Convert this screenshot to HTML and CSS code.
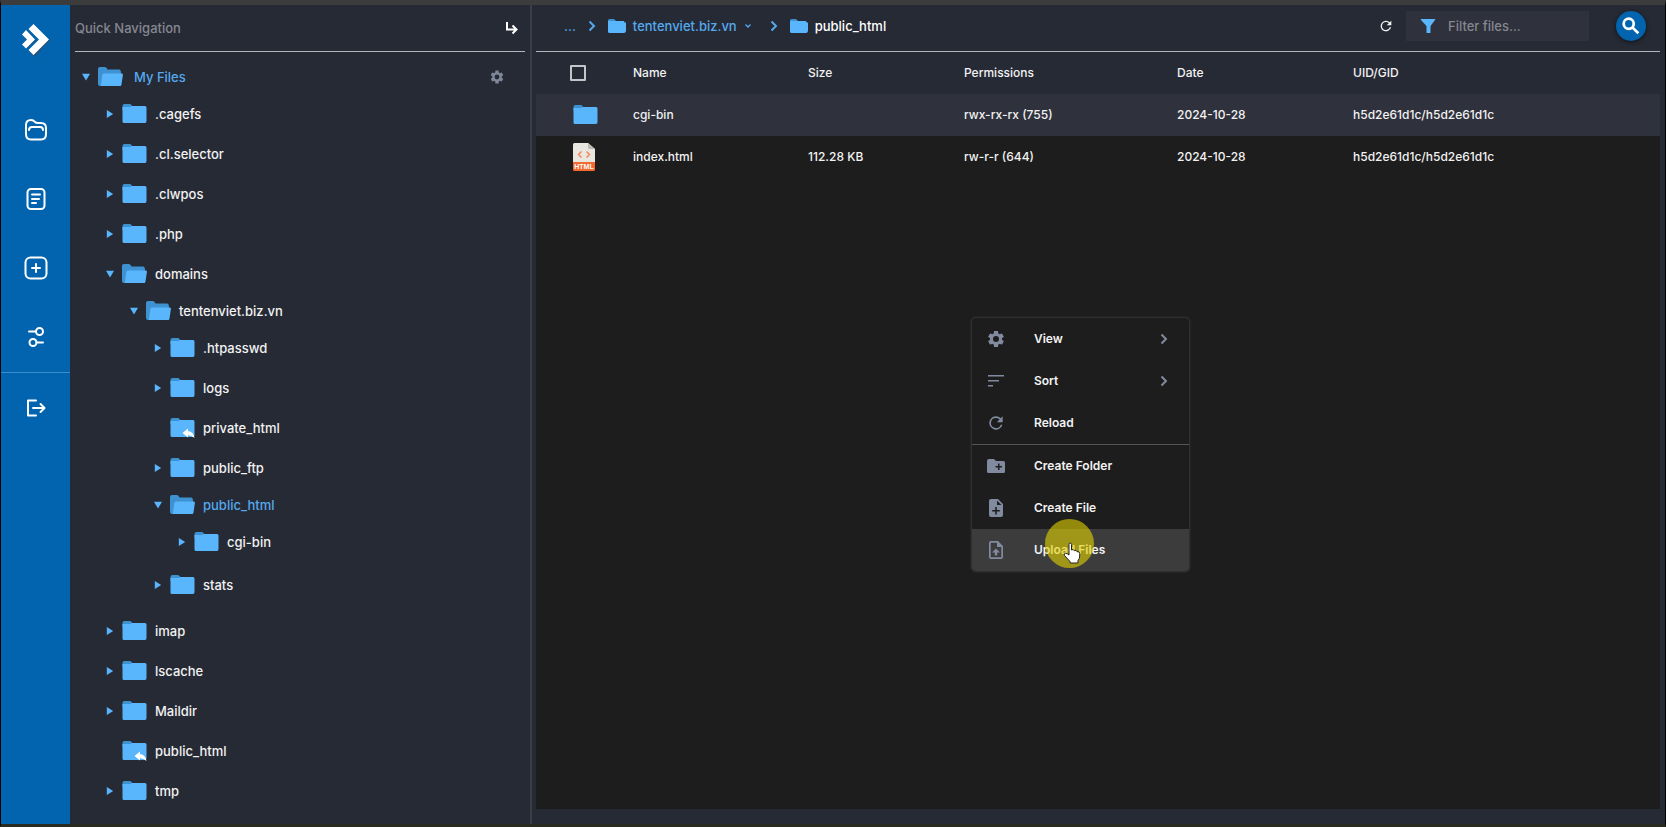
FILE: index.html
```html
<!DOCTYPE html>
<html lang="en">
<head>
<meta charset="utf-8">
<title>File Manager</title>
<link rel="stylesheet" href="styles.css">
</head>
<body>
<svg class="defs" aria-hidden="true">
  <symbol id="folder" viewBox="0 0 24 20"><path fill="#3e92d2" d="M0 2Q0 0 2 0H7Q8.500 0 9 1L10 2.500V6H0Z"/><path fill="#59b5fc" d="M0 3H8L9.500 2H22.500Q24 2 24 3.500V17Q24 19 22.500 19H1.500Q0 19 0 17.500Z"/></symbol>
  <symbol id="folder-open" viewBox="0 0 25 20"><path fill="#3e92d2" d="M0 2Q0 0 2 0H7Q8.500 0 9.500 2.500H21Q23 2.500 23 6V19H2Q0 19 0 17Z"/><path fill="#59b5fc" d="M6 6.500H23.500Q25.300 6.500 24.900 8L23.500 17.500Q23.200 19 22 19H2.800L4.300 8Q4.600 6.500 6 6.500Z"/></symbol>
  <symbol id="folder-link" viewBox="0 0 24 20"><path fill="#3e92d2" d="M0 2Q0 0 2 0H7Q8.500 0 9 1L10 2.500V6H0Z"/><path fill="#59b5fc" d="M0 3H8L9.500 2H22.500Q24 2 24 3.500V17Q24 19 22.500 19H1.500Q0 19 0 17.500Z"/><path fill="#fff" d="M12 15L17.500 10.500V13Q23 13.500 24 20Q21 17 17.500 17.200V19.500Z"/></symbol>
  <symbol id="crumb-folder" viewBox="0 0 18 14"><path fill="#3e92d2" d="M0 1.500Q0 0 1.500 0H6L8 2H16V8H0Z"/><path fill="#59b5fc" d="M0 2H15.500Q16.500 2 16.500 3.500H18V11Q18 14 16 14H1.500Q0 14 0 12.500Z"/></symbol>
  <symbol id="gear" viewBox="0 0 24 24"><path d="M19.140 12.940c.04-.3.06-.61.06-.94 0-.32-.02-.64-.07-.94l2.030-1.580c.18-.14.23-.41.12-.61l-1.920-3.320c-.12-.22-.37-.29-.59-.22l-2.390.96c-.5-.38-1.030-.7-1.620-.94L14.400 2.810c-.04-.24-.24-.41-.48-.41h-3.840c-.24 0-.43.17-.47.41L9.250 5.350c-.59.24-1.130.57-1.620.94l-2.390-.96c-.22-.08-.47 0-.59.22L2.740 8.870c-.12.21-.08.47.12.61l2.030 1.580c-.05.3-.09.63-.09.94s.02.64.07.94l-2.030 1.580c-.18.14-.23.41-.12.61l1.920 3.320c.12.22.37.29.59.22l2.390-.96c.5.38 1.030.7 1.620.94l.36 2.540c.05.24.24.41.48.41h3.840c.24 0 .44-.17.47-.41l.36-2.540c.59-.24 1.130-.56 1.620-.94l2.390.96c.22.08.47 0 .59-.22l1.920-3.320c.12-.22.07-.47-.12-.61zM12 15.600A3.600 3.600 0 1 1 12 8.400a3.600 3.600 0 0 1 0 7.200z"/></symbol>
  <symbol id="reload" viewBox="0 0 24 24"><path d="M17.650 6.350A8 8 0 1 0 19.730 14h-2.080A6 6 0 1 1 12 6c1.660 0 3.140.69 4.220 1.780L13 11h7V4z"/></symbol>
  <symbol id="chevron" viewBox="0 0 8 12"><path d="M1.500 1.500L6 6L1.500 10.500" fill="none" stroke="currentColor" stroke-width="2"/></symbol>
</svg>

<div class="app">
  <nav class="rail" aria-label="Main">
    <a class="logo" href="#" aria-label="Home"><svg width="30" height="36" viewBox="0 0 30 36"><path fill="#334b68" opacity=".7" d="M14 4L29 17.500L14 34L9 29L21 18L9 7ZM2 12L7 8L15 17.500L6 25L2 21L6 18Z"/><path fill="#fff" d="M12.500 1L28 16.500L12.500 32L7.500 27L18 16.500L7.500 6ZM5 7L14 16.500L5 25.500L1 21.500L6 16.500L1 11.500Z"/></svg></a>
    <a href="#" aria-label="Files"><svg width="24" height="24" viewBox="0 0 24 24"><path d="M2 7Q2 2 7 2Q9.500 2 11 4Q12 5 14 5H17Q22 5 22 10V16Q22 21.500 17 21.500H7Q2 21.500 2 16ZM5 12Q5 9 8 9H16Q19 9 19 12"/></svg></a>
    <a href="#" aria-label="Notes"><svg width="24" height="24" viewBox="0 0 24 24"><rect x="3.500" y="2" width="17" height="20" rx="3.500"/><path d="M8 7.500H16M8 12H15M8 16H12"/></svg></a>
    <a href="#" aria-label="Add"><svg width="24" height="24" viewBox="0 0 24 24"><rect x="1.500" y="1.500" width="21" height="21" rx="5"/><path d="M12 8V16M8 12H16"/></svg></a>
    <a href="#" aria-label="Settings"><svg width="24" height="24" viewBox="0 0 24 24"><circle cx="15.500" cy="6.500" r="3.500"/><circle cx="9" cy="17.500" r="3.500"/><path d="M5 6.500H12M12.500 17.500H19"/></svg></a>
    <a class="logout" href="#" aria-label="Log out"><svg width="24" height="24" viewBox="0 0 24 24"><path d="M12 4.500H4V19.500H12M9 12H20M16.500 8L20.500 12L16.500 16"/></svg></a>
  </nav>

  <aside class="side">
    <header class="side-head"><span>Quick Navigation</span><button type="button" aria-label="Go to folder"><svg class="line" width="14" height="14" viewBox="0 0 14 14"><path d="M2 1V8.500H11M7.500 4.500L11.500 8.500L7.500 12.500"/></svg></button></header>
    <ul class="tree">
      <li><div class="row root compact active"><i class="tri down"></i><svg class="folder"><use href="#folder-open"/></svg><a href="#">My Files</a><button type="button" aria-label="Tree settings"><svg width="16" height="16"><use href="#gear"/></svg></button></div>
        <ul>
          <li><div class="row"><i class="tri"></i><svg class="folder"><use href="#folder"/></svg><a href="#">.cagefs</a></div></li>
          <li><div class="row"><i class="tri"></i><svg class="folder"><use href="#folder"/></svg><a href="#">.cl.selector</a></div></li>
          <li><div class="row"><i class="tri"></i><svg class="folder"><use href="#folder"/></svg><a href="#">.clwpos</a></div></li>
          <li><div class="row"><i class="tri"></i><svg class="folder"><use href="#folder"/></svg><a href="#">.php</a></div></li>
          <li><div class="row"><i class="tri down"></i><svg class="folder"><use href="#folder-open"/></svg><a href="#">domains</a></div>
            <ul>
              <li><div class="row compact"><i class="tri down"></i><svg class="folder"><use href="#folder-open"/></svg><a href="#">tentenviet.biz.vn</a></div>
                <ul>
                  <li><div class="row"><i class="tri"></i><svg class="folder"><use href="#folder"/></svg><a href="#">.htpasswd</a></div></li>
                  <li><div class="row"><i class="tri"></i><svg class="folder"><use href="#folder"/></svg><a href="#">logs</a></div></li>
                  <li><div class="row"><i class="tri none"></i><svg class="folder"><use href="#folder-link"/></svg><a href="#">private_html</a></div></li>
                  <li><div class="row"><i class="tri"></i><svg class="folder"><use href="#folder"/></svg><a href="#">public_ftp</a></div></li>
                  <li><div class="row compact active"><i class="tri down"></i><svg class="folder"><use href="#folder-open"/></svg><a href="#">public_html</a></div>
                    <ul>
                      <li><div class="row"><i class="tri"></i><svg class="folder"><use href="#folder"/></svg><a href="#">cgi-bin</a></div></li>
                    </ul>
                  </li>
                  <li><div class="row"><i class="tri"></i><svg class="folder"><use href="#folder"/></svg><a href="#">stats</a></div></li>
                </ul>
              </li>
            </ul>
          </li>
          <li><div class="row"><i class="tri"></i><svg class="folder"><use href="#folder"/></svg><a href="#">imap</a></div></li>
          <li><div class="row"><i class="tri"></i><svg class="folder"><use href="#folder"/></svg><a href="#">lscache</a></div></li>
          <li><div class="row"><i class="tri"></i><svg class="folder"><use href="#folder"/></svg><a href="#">Maildir</a></div></li>
          <li><div class="row"><i class="tri none"></i><svg class="folder"><use href="#folder-link"/></svg><a href="#">public_html</a></div></li>
          <li><div class="row"><i class="tri"></i><svg class="folder"><use href="#folder"/></svg><a href="#">tmp</a></div></li>
        </ul>
      </li>
    </ul>
  </aside>

  <main class="main">
    <header class="bar">
      <nav class="crumbs" aria-label="Breadcrumb">
        <a class="dots" href="#">...</a>
        <svg class="sep" width="8" height="12"><use href="#chevron"/></svg>
        <a href="#"><svg width="18" height="14"><use href="#crumb-folder"/></svg>tentenviet.biz.vn<svg class="caret" width="8" height="6" viewBox="0 0 8 6"><path d="M1.500 1.500L4 4L6.500 1.500" fill="none" stroke="currentColor" stroke-width="1.300"/></svg></a>
        <svg class="sep wide" width="8" height="12"><use href="#chevron"/></svg>
        <a class="here" href="#"><svg width="18" height="14"><use href="#crumb-folder"/></svg>public_html</a>
      </nav>
      <button class="refresh" type="button" aria-label="Refresh"><svg width="16" height="16"><use href="#reload"/></svg></button>
      <label class="filter"><svg width="16" height="16" viewBox="0 0 16 16"><path fill="#59b5fc" d="M1 1H15Q15.500 1.500 15 2L10.500 8V15H6.500V8L1 2Q.500 1.500 1 1Z"/></svg><input type="text" placeholder="Filter files..." aria-label="Filter files"></label>
      <button class="search" type="button" aria-label="Search"><svg class="line" width="22" height="22" viewBox="0 0 24 24"><circle cx="9.500" cy="9.500" r="5.500"/><path d="M13.500 13.500L20 20"/></svg></button>
    </header>

    <section class="files">
      <table>
        <colgroup><col class="c-icon"><col class="c-name"><col class="c-size"><col class="c-perm"><col class="c-date"><col></colgroup>
        <thead><tr><th><input type="checkbox" aria-label="Select all"></th><th>Name</th><th>Size</th><th>Permissions</th><th>Date</th><th>UID/GID</th></tr></thead>
        <tbody>
          <tr class="lit"><td><svg class="folder"><use href="#folder"/></svg></td><td>cgi-bin</td><td></td><td>rwx-rx-rx (755)</td><td>2024-10-28</td><td>h5d2e61d1c/h5d2e61d1c</td></tr>
          <tr><td><svg class="html" width="22" height="28" viewBox="0 0 22 28"><path fill="#e9e7df" d="M1.500 0H15L22 6V20H0V1.500Q0 0 1.500 0Z"/><path fill="#bcbab4" d="M15 0L22 6H16.500Q15 6 15 4.500Z"/><path fill="#f26a2e" d="M0 19H22V26.500Q22 28 20.500 28H1.500Q0 28 0 26.500Z"/><path d="M8.500 8.500L5.500 11.500L8.500 14.500M13.500 8.500L16.500 11.500L13.500 14.500" fill="none" stroke="#f28a5c" stroke-width="1.500"/><text x="11" y="26" text-anchor="middle">HTML</text></svg></td><td>index.html</td><td>112.28 KB</td><td>rw-r-r (644)</td><td>2024-10-28</td><td>h5d2e61d1c/h5d2e61d1c</td></tr>
        </tbody>
      </table>
    </section>
  </main>
</div>

<div class="menu" role="menu">
  <button type="button" role="menuitem"><svg><use href="#gear"/></svg><span>View</span><svg class="more"><use href="#chevron"/></svg></button>
  <button type="button" role="menuitem"><svg viewBox="0 0 20 20"><path d="M2 4H18V5.500H2ZM2 9H13V10.500H2ZM2 14H7V15.500H2Z"/></svg><span>Sort</span><svg class="more"><use href="#chevron"/></svg></button>
  <button type="button" role="menuitem"><svg><use href="#reload"/></svg><span>Reload</span></button>
  <hr>
  <button type="button" role="menuitem"><svg viewBox="0 0 20 20"><path fill-rule="evenodd" d="M1 5Q1 3 3 3H8L10 5H17.500Q19 5 19 6.500V15.500Q19 17 17.500 17H2.500Q1 17 1 15.500ZM12 7.500V10H9.500V11.500H12V14H13.500V11.500H16V10H13.500V7.500Z"/></svg><span>Create Folder</span></button>
  <button type="button" role="menuitem"><svg viewBox="0 0 20 20"><path fill-rule="evenodd" d="M3 3Q3 1 5 1H12L17 6V17Q17 19 15 19H5Q3 19 3 17ZM11 2.500V7H15.500ZM9.200 9V12H6.200V13.600H9.200V16.600H10.800V13.600H13.800V12H10.800V9Z"/></svg><span>Create File</span></button>
  <button class="hover" type="button" role="menuitem"><svg viewBox="0 0 20 20"><path fill-rule="evenodd" d="M3 3Q3 1 5 1H12L17 6V17Q17 19 15 19H5Q3 19 3 17ZM4.700 2.700V17.300H15.300V7H11V2.700ZM10 8.500L14 12.500H11.200V15.500H8.800V12.500H6Z"/></svg><span>Upload Files</span></button>
</div>
<div class="pointer"><svg width="18" height="22" viewBox="0 0 18 22"><path fill="#fff" stroke="#222" stroke-width="1" stroke-linejoin="round" d="M6 13V2.500Q6 1 7.200 1Q8.500 1 8.500 2.500V8Q10.500 6.500 11.300 8.700Q13.500 7.500 14 9.700Q16.700 9 16.700 11.500V14Q16.700 17 15 18.500V21H7V19.500L1.500 13.500Q.500 11.500 2.500 11.300Q4.500 11.500 6 13Z"/></svg></div>
</body>
</html>
```
FILE: styles.css
```css
* { box-sizing: border-box; }

body {
  margin: 0;
  min-height: 100vh;
  display: flex;
  background: #262a35;
  border-top: 5px solid #3c3c3c;
  border-bottom: 3px solid #292b20;
  border-left: 1px solid #000;
  border-right: 1px solid #000;
  color: #f2f2f2;
  font: 500 13px/20px Inter, sans-serif;
}

a { color: inherit; text-decoration: none; }
ul { list-style: none; margin: 0; padding: 0; }
svg { display: block; flex: none; fill: currentColor; }
button { padding: 0; border: 0; background: none; color: inherit; font: inherit; }
.defs { position: absolute; width: 0; height: 0; }
.line { fill: none; stroke: #fff; stroke-width: 2; }
.app { flex: 1; display: flex; }

/* Icon rail */
.rail {
  flex: none;
  width: 69px;
  display: flex;
  flex-direction: column;
  align-items: center;
  gap: 45px;
  padding-top: 18px;
  background: #0264ae;
}
.rail a:not(.logo) svg { fill: none; stroke: #fff; stroke-width: 2; stroke-linecap: round; stroke-linejoin: round; }
.rail .logo { margin-bottom: 14px; }
.rail .logout {
  display: flex;
  justify-content: center;
  align-self: stretch;
  margin-top: -22px;
  padding-top: 23px;
  border-top: 1px solid #3a8dcb;
}

/* Folder tree */
.side { flex: none; width: 462px; padding: 0 5px; border-right: 2px solid #3b3e49; }
.side-head {
  display: flex;
  justify-content: space-between;
  align-items: center;
  height: 47px;
  padding-right: 6px;
  border-bottom: 1px solid #b4b6bb;
  color: #85878f;
}
.tree { padding: 8px 0 0 7px; }
.tree ul { padding: 0 0 3px 24px; }
.row { display: flex; align-items: center; height: 40px; gap: 8px; }
.compact { height: 34px; }
.active { color: #54a9ef; }
.folder { width: 25px; height: 20px; }
.root a { flex: 1; margin-left: 3px; }
.root button { margin-right: 20px; color: #7f8799; }
.tri { width: 8px; height: 8px; background: #59b5fc; clip-path: polygon(10% 0, 90% 50%, 10% 100%); }
.down { clip-path: polygon(0 10%, 100% 10%, 50% 95%); }
.none { visibility: hidden; }

/* File browser */
.main { flex: 1; display: flex; flex-direction: column; padding: 0 5px 15px 4px; }
.bar { display: flex; align-items: center; height: 47px; padding-bottom: 5px; border-bottom: 1px solid #b4b6bb; }
.crumbs { flex: 1; display: flex; align-items: center; gap: 12px; padding-left: 28px; color: #54a9ef; }
.crumbs a { display: flex; align-items: center; gap: 7px; }
.crumbs .here { color: #fff; }
.wide { margin-left: 6px; }
.refresh { margin-right: 12px; }
.filter { display: flex; align-items: center; gap: 12px; width: 183px; height: 30px; padding-left: 14px; background: #2f313c; }
.filter input { flex: 1; min-width: 0; padding: 0; border: 0; background: none; color: #fff; font: inherit; }
.filter input::placeholder { color: #85878f; opacity: 1; }
.search {
  display: grid;
  place-items: center;
  width: 30px;
  height: 30px;
  margin: 0 14px 0 27px;
  border-radius: 50%;
  background: #0264ae;
  box-shadow: 0 1px 4px #111;
}
.search .line { stroke-width: 3; }

.files { flex: 1; background: #1d1d1d; }
table { width: 100%; border-collapse: collapse; table-layout: fixed; font-size: 12px; }
thead { background: #262a35; }
.lit { background: #2f313c; }
th, td { height: 42px; padding: 0; text-align: left; font-weight: 500; }
td:first-child { padding-left: 37px; }
th:first-child { padding-left: 34px; }
.c-icon { width: 97px; }
.c-name { width: 175px; }
.c-size { width: 156px; }
.c-perm { width: 213px; }
.c-date { width: 176px; }
th input { display: block; appearance: none; width: 16px; height: 16px; margin: 0; border: 2px solid #c4c5c9; border-radius: 1px; }
.html text { fill: #fff; font: 700 7px "Liberation Sans", sans-serif; }

/* Context menu */
.menu {
  position: absolute;
  left: 972px;
  top: 318px;
  width: 217px;
  overflow: hidden;
  border-radius: 4px;
  background: #1d1d1d;
  box-shadow: 0 0 3px #555;
}
.menu button { display: flex; align-items: center; gap: 28px; width: 100%; height: 42px; padding: 0 19px 0 14px; font-size: 12px; font-weight: 600; text-align: left; }
.menu svg { width: 20px; height: 20px; color: #828a9f; }
.menu span { flex: 1; }
.menu .more { width: 12px; height: 12px; }
.menu hr { margin: 0; border: 0; border-top: 1px solid #565656; }
.menu .hover { background: #3c3c3c; }

.pointer {
  position: absolute;
  left: 1045px;
  top: 519px;
  width: 49px;
  height: 49px;
  padding: 23px 0 0 18px;
  border-radius: 50%;
  background: rgba(227, 210, 0, 0.6);
}
```
